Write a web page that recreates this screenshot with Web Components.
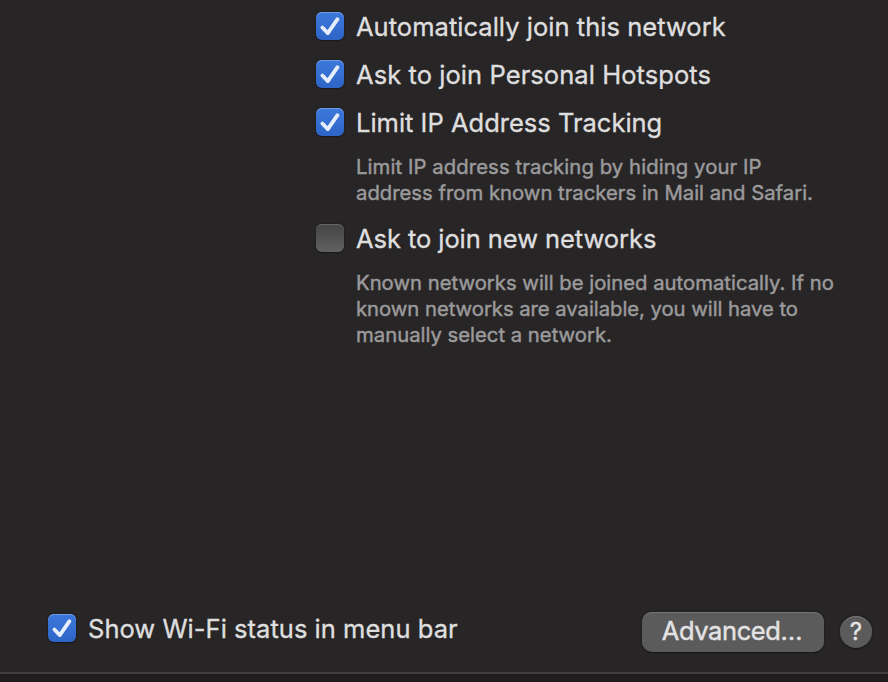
<!DOCTYPE html>
<html lang="en">
<head>
<meta charset="utf-8">
<title>Wi-Fi</title>
<style>
html,body{margin:0;height:100%;background:#272526;overflow:hidden}
</style>
</head>
<body>
<wifi-pane></wifi-pane>
<script>
class CheckBox extends HTMLElement{
  constructor(){
    super();
    this.attachShadow({mode:'open'}).innerHTML=`<style>
:host{display:flex;height:28px;gap:12px;align-items:center;font:400 25.5px/30px Inter,sans-serif;color:#dfdedf;white-space:nowrap}
.box{flex:none;width:28px;height:28px;border-radius:6px;background:linear-gradient(#454445,#626162);box-shadow:inset 0 1px 0 #676667,0 0 1px 1px #1e1c1d80,0 1px 1px #0006}
:host([checked]) .box{background:linear-gradient(#3c78dc,#2e65c6);box-shadow:inset 0 1px 0 #709ce4,0 0 1px 1px #1d1b1c80,0 1px 1px #0006}
svg{display:none;width:28px;height:28px}
:host([checked]) svg{display:block}
.label{-webkit-text-stroke:.35px currentColor;padding-top:2px}
</style><span class="box"><svg viewBox="0 0 28 28"><path d="M6.4 15.5 11.8 21.1 21.5 7.2" fill="none" stroke="#e6edfb" stroke-width="3.8" stroke-linecap="round" stroke-linejoin="round"/></svg></span><span class="label"><slot></slot></span>`;
  }
}
class HelpText extends HTMLElement{
  constructor(){
    super();
    this.attachShadow({mode:'open'}).innerHTML=`<style>
:host{display:block;padding-left:40px;font:400 20.3px/26px Inter,sans-serif;color:#9b9a9b;white-space:nowrap;-webkit-text-stroke:.45px currentColor}
::slotted(span){display:table}
</style><slot></slot>`;
  }
}
class PushButton extends HTMLElement{
  constructor(){
    super();
    this.attachShadow({mode:'open'}).innerHTML=`<style>
:host{display:flex;align-items:center;justify-content:center;width:182px;height:40px;border-radius:10px;background:#5c5b5c;box-shadow:inset 0 1px 0 #777677,0 0 1px 1px #1d1b1c80,0 1px 1px #0007;font:400 25.5px/38px Inter,sans-serif;color:#e4e3e4;-webkit-text-stroke:.4px currentColor;white-space:nowrap;padding:0 2px 2px 0;box-sizing:border-box;letter-spacing:-.4px}
:host([round]){width:32px;height:32px;border-radius:50%;font-size:24px;line-height:32px;padding:0;letter-spacing:0}
</style><slot></slot>`;
  }
}
class WifiPane extends HTMLElement{
  constructor(){
    super();
    this.attachShadow({mode:'open'}).innerHTML=`<style>
:host{display:flex;flex-direction:column;box-sizing:border-box;height:682px;background:#272526}
main{box-sizing:border-box;height:672px;padding:12px 16px 20px 48px;display:flex;flex-direction:column;justify-content:space-between}
.options{display:flex;flex-direction:column;margin-left:268px}
.options check-box+check-box{margin-top:20px}
help-text{margin:18px 0}
footer{display:flex;align-items:center;gap:16px;height:40px}
footer check-box{margin-right:auto;margin-bottom:8px}
.edge{height:10px;box-sizing:border-box;background:#1f1d1e;border-top:2px solid #403e3f}
</style><main><div class="options">
<check-box checked><span style="letter-spacing:.03px">Automatically join this network</span></check-box>
<check-box checked><span style="letter-spacing:.07px">Ask to join Personal Hotspots</span></check-box>
<check-box checked><span>Limit IP Address Tracking</span></check-box>
<help-text><span style="letter-spacing:.09px">Limit IP address tracking by hiding your IP</span><span>address from known trackers in Mail and Safari.</span></help-text>
<check-box><span style="letter-spacing:-.07px">Ask to join new networks</span></check-box>
<help-text><span>Known networks will be joined automatically. If no</span><span style="letter-spacing:-.04px">known networks are available, you will have to</span><span>manually select a network.</span></help-text>
</div>
<footer><check-box checked><span style="letter-spacing:.03px">Show Wi-Fi status in menu bar</span></check-box><push-button><span>Advanced…</span></push-button><push-button round><span>?</span></push-button></footer></main><div class="edge"></div>`;
  }
}
customElements.define('check-box',CheckBox);
customElements.define('help-text',HelpText);
customElements.define('push-button',PushButton);
customElements.define('wifi-pane',WifiPane);
</script>
</body>
</html>
